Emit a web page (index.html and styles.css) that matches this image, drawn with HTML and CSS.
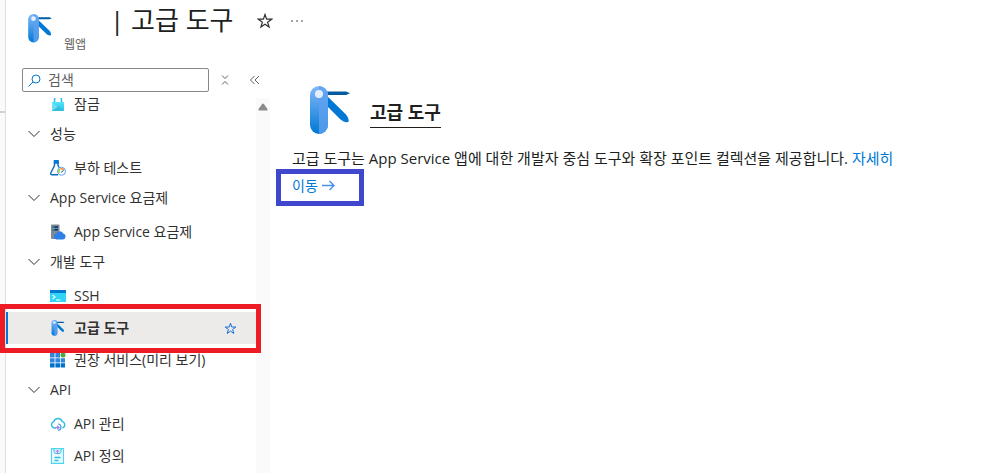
FILE: index.html
```html
<!DOCTYPE html>
<html lang="ko">
<head>
    <meta charset="UTF-8">
    <meta name="viewport" content="width=device-width, initial-scale=1.0">
    <title>고급 도구</title>
    <link rel="stylesheet" href="styles.css">
</head>
<body>
    <!-- shared shapes -->
    <svg class="defs" aria-hidden="true">
        <defs>
            <linearGradient id="knife" x1="0" y1="0" x2="0" y2="1">
                <stop offset="0" stop-color="#83b9f9"/>
                <stop offset="1" stop-color="#0078d4"/>
            </linearGradient>
            <linearGradient id="lock" x1="0" y1="0" x2="0" y2="1">
                <stop offset="0" stop-color="#50e6ff"/>
                <stop offset="1" stop-color="#32bedd"/>
            </linearGradient>
            <symbol id="tools" viewBox="0 0 40 49">
                <path d="M16 5.500h20l4 1.700-4 1.800H16z" fill="#005ba1"/>
                <path d="M15 8l21 20.500c2 2.500 3 5 2.500 7.500-3 .5-5.500-.5-8-2.500L15 18z" fill="#0078d4"/>
                <rect x="0" y="0" width="18" height="48" rx="9" fill="url(#knife)"/>
                <path d="M9 0a9 9 0 0 1 9 9v30a9 9 0 0 1-9 9z" fill="#5ea0ef" opacity=".8"/>
                <circle cx="9" cy="8" r="4" fill="#e3effc"/>
            </symbol>
            <symbol id="star" viewBox="0 0 16 16">
                <path d="M8 1.500l1.600 4.700h5l-4 3 1.500 4.900L8 11.200l-4.100 2.900 1.500-4.900-4-3h5z" fill="none" stroke="currentColor" stroke-width="1.200"/>
            </symbol>
            <symbol id="chevron" viewBox="0 0 12 12">
                <path d="M.5 3l5.500 5.500L11.500 3" fill="none" stroke="currentColor"/>
            </symbol>
        </defs>
    </svg>

    <div class="rail"><hr></div>
    <div class="blade">
        <header>
            <svg class="header-icon"><use href="#tools"/></svg>
            <span class="type">웹앱</span>
            <h1>| 고급 도구</h1>
            <button class="icon-btn" aria-label="즐겨찾기"><svg width="16" height="16"><use href="#star"/></svg></button>
            <button class="icon-btn more" aria-label="더 보기">
                <svg width="12" height="4" viewBox="0 0 12 4" fill="currentColor"><circle cx="1" cy="2" r=".8"/><circle cx="6" cy="2" r=".8"/><circle cx="11" cy="2" r=".8"/></svg>
            </button>
        </header>

        <div class="content">
            <nav>
                <div class="toolbar">
                    <label class="search">
                        <svg width="13" height="13" viewBox="0 0 13 13" fill="none" stroke="#0078d4"><circle cx="8" cy="5" r="4"/><path d="M5 8L.5 12.500"/></svg>
                        <input type="text" placeholder="검색" aria-label="검색">
                    </label>
                    <button class="icon-btn" aria-label="모두 축소">
                        <svg width="8" height="10" viewBox="0 0 8 10" fill="none" stroke="currentColor"><path d="M1 .5l3 3 3-3M1 9.500l3-3 3 3"/></svg>
                    </button>
                    <button class="icon-btn" aria-label="메뉴 숨기기">
                        <svg width="10" height="10" viewBox="0 0 10 10" fill="none" stroke="currentColor"><path d="M4.500 1l-4 4 4 4M9 1L5 5l4 4"/></svg>
                    </button>
                </div>

                <div class="scroll">
                    <ul class="menu">
                        <li><a href="#">
                            <svg viewBox="0 0 16 16"><path d="M4.500 8V4a3.500 3.500 0 0 1 7 0v4" fill="none" stroke="#32bedd" stroke-width="1.600"/><rect x="2" y="6" width="12" height="9" rx=".6" fill="url(#lock)"/><path d="M2 15l6-5 6 5z" fill="#32bedd"/><path d="M2 7l6 4-6 4z" fill="#9cebff" opacity=".5"/></svg>
                            잠금</a></li>
                        <li><button class="group"><svg><use href="#chevron"/></svg>성능</button></li>
                        <li><a href="#">
                            <svg viewBox="0 0 16 16"><path d="M4.500 1v4.500L.8 13c-.4 1 0 1.700 1 1.700H8M8 1v4.500l1.500 2.500" fill="none" stroke="#0f6cbd" stroke-width="1.400"/><path d="M3.800 0h5v3.800h-5z" fill="#0078d4"/><circle cx="11.500" cy="11.300" r="4" fill="#fff" stroke="#5ea0ef"/><path d="M9.300 12.800a2.500 2.500 0 0 1 .8-3.500" fill="none" stroke="#86d633" stroke-width="1.500"/><path d="M10.500 9a2.500 2.500 0 0 1 3.200 1.500" fill="none" stroke="#f78d1e" stroke-width="1.500"/><path d="M11 12.500l2.500-2" stroke="#005ba1"/></svg>
                            부하 테스트</a></li>
                        <li><button class="group"><svg><use href="#chevron"/></svg>App Service 요금제</button></li>
                        <li><a href="#">
                            <svg viewBox="0 0 16 16"><path d="M1 1.500Q1 .5 2 .5h6.500q1 0 1 1V15H2q-1 0-1-1z" fill="#7f8a93"/><path d="M2.500 2.200H8v1.500H2.500zM2.500 5H8v1.500H2.500z" fill="#003067"/><path d="M2.500 3h2M2.500 5.700h2" stroke="#50e6ff" stroke-width=".7"/><path d="M6.500 15.500a3 3 0 0 1-.3-5.900 3.800 3.800 0 0 1 7-.2 3.100 3.100 0 0 1-.5 6.100z" fill="#2f7fe8"/></svg>
                            App Service 요금제</a></li>
                        <li><button class="group"><svg><use href="#chevron"/></svg>개발 도구</button></li>
                        <li><a href="#">
                            <svg viewBox="0 0 16 16"><path d="M0 2h16v12H0z" fill="#32d4f5"/><path d="M0 2h16v3H0z" fill="#0078d4"/><path d="M2.500 6.800L5 9l-2.500 2.200" fill="none" stroke="#fff" stroke-width="1.100"/><path d="M6 12h4.500" stroke="#fff"/></svg>
                            SSH</a></li>
                        <li class="selected"><a href="#" aria-current="page">
                            <svg><use href="#tools"/></svg>
                            고급 도구</a>
                            <button class="icon-btn fav" aria-label="즐겨찾기에 추가"><svg width="13" height="13"><use href="#star"/></svg></button>
                        </li>
                        <li><a href="#">
                            <svg viewBox="0 0 16 16"><path d="M0 1h4.600v4.600H0zM5.400 1H10v4.600H5.400zM0 6.300h4.600v4.200H0zM5.400 6.300H10v4.200H5.400zM10.700 6.300H15v4.200h-4.300z" fill="#2f86dc"/><path d="M0 11.200h4.600V15.500H0zM5.400 11.200H10v4.300H5.400zM10.700 11.200H15v4.300h-4.300z" fill="#0072cc"/><circle cx="13" cy="3" r="2.500" fill="#4fa83d"/></svg>
                            권장 서비스(미리 보기)</a></li>
                        <li><button class="group"><svg><use href="#chevron"/></svg>API</button></li>
                        <li><a href="#">
                            <svg viewBox="0 0 16 16" fill="none"><path d="M6 12H4.200A3.300 3.300 0 0 1 3.700 5.700a4.500 4.500 0 0 1 8.600 0 3.300 3.300 0 0 1 .2 6.300" stroke="#32bedd" stroke-width="1.400"/><path d="M8 8c2.500 0 3 1.800 3 3.200S10 14 8 14.500" stroke="#3f97e0" stroke-width="1.200"/><path d="M5 11.500h4M7 9.700l2 1.800-2 1.800" stroke="#a67af4" stroke-width="1.200"/></svg>
                            API 관리</a></li>
                        <li><a href="#">
                            <svg viewBox="0 0 16 16" fill="none"><path d="M1.500.6h12v14.800h-12z" fill="#e9fbff" stroke="#50d5ef" stroke-width="1.100"/><path d="M4 1v2.500q0 2 2 2h3q2 0 2-2V1" stroke="#32bedd"/><path d="M5.500 3h4M7.500 2v4" stroke="#a67af4" stroke-width="1.200"/><path d="M4.500 9.500h6M4.500 12.500h4" stroke="#32bedd" stroke-width="1.300"/></svg>
                            API 정의</a></li>
                    </ul>
                    <div class="scrollbar">
                        <svg width="10" height="8" viewBox="0 0 10 8"><path d="M4 1.200q1-1.200 2 0L9.500 6q.5 1.500-1 1.500h-7Q0 7.500.5 6z" fill="#8a8a8a"/></svg>
                    </div>
                </div>
            </nav>

            <main>
                <div class="title">
                    <svg width="40" height="49"><use href="#tools"/></svg>
                    <h2>고급 도구</h2>
                </div>
                <p>고급 도구는 App Service 앱에 대한 개발자 중심 도구와 확장 포인트 컬렉션을 제공합니다. <a href="#">자세히</a></p>
                <a class="go" href="#">이동
                    <svg width="13" height="11" viewBox="0 0 13 11" fill="none" stroke="#4b8fe8" stroke-width="1.400"><path d="M0 5.500h12M7.500 1L12 5.500 7.500 10"/></svg>
                </a>
            </main>
        </div>
    </div>
</body>
</html>
```

FILE: styles.css
```css
* {
    box-sizing: border-box;
}

body {
    margin: 0;
    display: flex;
    height: 100vh;
    overflow: hidden;
    background-color: #fff;
    color: #323130;
    font-family: "Open Sans", "Noto Sans CJK KR", sans-serif;
    font-size: 14px;
    line-height: 20px;
}

a {
    color: #0078d4;
    text-decoration: none;
}

button {
    font: inherit;
    color: inherit;
    background: none;
    border: 0;
    padding: 0;
}

svg {
    display: block;
    flex: none;
}

.defs {
    position: absolute;
    width: 0;
    height: 0;
}

.rail {
    width: 6px;
    flex: none;
    background-color: #fafafa;
    border-right: 1px solid #e1e1e1;
}

.rail hr {
    margin: 111px 0 0;
    border: 0;
    border-top: 2px solid #d2d2d2;
}

.blade {
    flex: 1;
    min-width: 0;
    display: flex;
    flex-direction: column;
}

header {
    display: flex;
    align-items: flex-start;
    height: 68px;
    padding-left: 22px;
}

.header-icon {
    width: 24px;
    height: 29px;
    margin-top: 14px;
}

.type {
    width: 46px;
    margin: 35px 0 0 12px;
    font-size: 12px;
    color: #605e5c;
}

h1 {
    margin: 4px 24px 0 0;
    font-size: 26px;
    font-weight: 400;
    line-height: 32px;
    color: #201f1e;
}

.icon-btn {
    display: flex;
    align-items: center;
    justify-content: center;
    width: 16px;
    height: 24px;
    color: #605e5c;
}

header .icon-btn {
    margin-top: 9px;
    color: #323130;
}

header .more {
    margin-left: 16px;
}

.content {
    flex: 1;
    min-height: 0;
    display: flex;
}

nav {
    width: 264px;
    flex: none;
    display: flex;
    flex-direction: column;
}

.toolbar {
    display: flex;
    align-items: center;
    gap: 14px;
    height: 24px;
    padding: 0 7px 0 16px;
}

.toolbar .icon-btn:first-of-type {
    margin-left: -6px;
}

.search {
    flex: 1;
    display: flex;
    align-items: center;
    gap: 7px;
    height: 24px;
    padding: 0 5px;
    border: 1px solid #8a8886;
    border-radius: 2px;
}

.search input {
    width: 100%;
    min-width: 0;
    padding: 0;
    border: 0;
    outline: 0;
    background: none;
    font: inherit;
}

.search input::placeholder {
    color: #605e5c;
}

.scroll {
    flex: 1;
    min-height: 0;
    display: flex;
    margin-top: 6px;
    clip-path: inset(0 -8px);
}

.menu {
    flex: 1;
    margin: -10px 0 0;
    padding: 0;
    list-style: none;
}

.menu li {
    height: 32px;
}

.menu a {
    display: flex;
    align-items: center;
    gap: 8px;
    height: 32px;
    padding-left: 44px;
    color: #323130;
}

.menu a svg {
    width: 16px;
    height: 16px;
}

.group {
    display: flex;
    align-items: center;
    gap: 10px;
    height: 28px;
    padding-left: 22px;
}

.group svg {
    width: 12px;
    height: 12px;
}

.menu .selected {
    position: relative;
    display: flex;
    align-items: center;
    justify-content: space-between;
    padding-right: 18px;
    background-color: #edebe9;
    border-left: 2px solid #0078d4;
    font-weight: 600;
}

.selected a {
    padding-left: 42px;
}

.selected .fav {
    color: #0f6cdb;
}

/* highlight frame */
.selected::after {
    content: "";
    position: absolute;
    inset: -8px -5px -9px -8px;
    border: 5px solid #ed1c24;
    pointer-events: none;
}

.scrollbar {
    width: 14px;
    padding: 5px 2px;
    background-color: #fafafa;
}

main {
    flex: 1;
    padding: 18px 16px 0 22px;
    color: #201f1e;
}

.title {
    display: flex;
    align-items: flex-start;
    gap: 20px;
    padding-left: 18px;
}

h2 {
    margin: 12px 0 0;
    padding-bottom: 1px;
    font-size: 18px;
    font-weight: 600;
    line-height: 28px;
    border-bottom: 1px solid #201f1e;
}

main p {
    margin: 12px 0 0;
    font-size: 15px;
    line-height: 22px;
}

.go {
    display: inline-flex;
    align-items: center;
    gap: 4px;
    width: 88px;
    height: 37px;
    margin: 0 0 0 -16px;
    padding: 0 0 4px 11px;
    border: 5px solid #3f48cc;
}
```
